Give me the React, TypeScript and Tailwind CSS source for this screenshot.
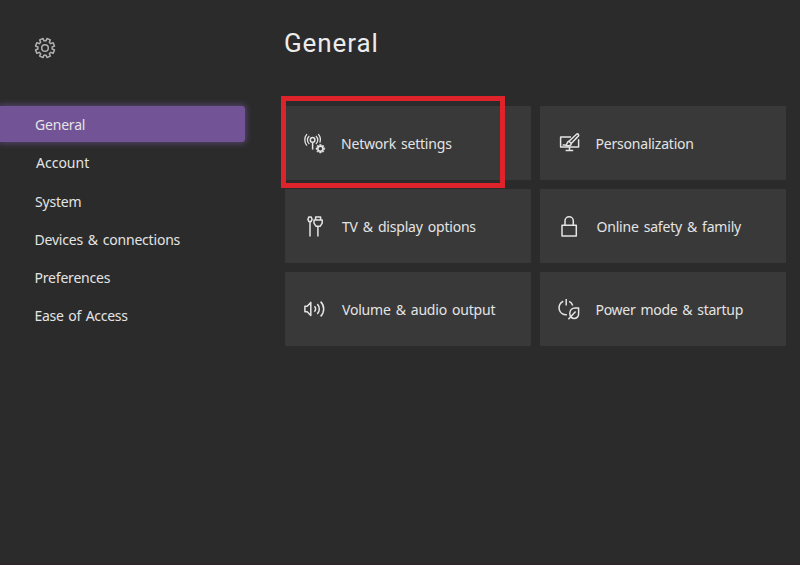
import type { ReactNode } from 'react'

// Outline of an eight-toothed cog, turned clockwise by `turn` radians
function cogPath(cx: number, cy: number, outer: number, inner: number, turn = 0) {
  const points: string[] = []
  for (let i = 0; i < 8; i++) {
    const mid = (i * Math.PI) / 4 + turn
    const corners = [
      [inner, -0.25],
      [outer, -0.19],
      [outer, 0.19],
      [inner, 0.25],
    ]
    corners.forEach(([r, offset]) => {
      const x = cx + r * Math.sin(mid + offset)
      const y = cy - r * Math.cos(mid + offset)
      points.push(`${x.toFixed(2)} ${y.toFixed(2)}`)
    })
  }
  return `M${points.join('L')}Z`
}

function Icon({ children, className = '' }: { children: ReactNode; className?: string }) {
  return (
    <svg
      viewBox="0 0 24 24"
      className={`h-6 w-6 shrink-0 ${className}`}
      fill="none"
      stroke="currentColor"
      strokeWidth="1.5"
      strokeLinejoin="round"
    >
      {children}
    </svg>
  )
}

const GearIcon = () => (
  <Icon className="text-[#b0b0b0]">
    <path d={cogPath(12, 12, 9.7, 7.2, Math.PI / 8)} />
    <circle cx="12" cy="12" r="3.3" />
  </Icon>
)

const NetworkIcon = () => (
  <Icon>
    <circle cx="10.6" cy="8.9" r="2.3" />
    <path d="M10.6 11.2V18.6" />
    <path d="M7.3 4.9a5.2 5.2 0 0 0 0 8M13.9 4.9a5.2 5.2 0 0 1 0 8" strokeWidth="1.3" />
    <path d="M4.9 3.2a8.8 8.8 0 0 0 0 11.4M16.3 3.2a8.8 8.8 0 0 1 1.6 8.4" strokeWidth="1.3" />
    <path d={cogPath(18.4, 17.7, 4.4, 3.2)} fill="currentColor" strokeWidth="0.5" />
    <circle cx="18.4" cy="17.7" r="1.8" className="fill-[#393939]" stroke="none" />
  </Icon>
)

const DisplayIcon = () => (
  <Icon>
    <path d="M6.9 2.9h2.2l1 2.3-1 2.4H6.9l-1-2.4zM8 7.6v15" />
    <path d="M13.6 6V3h5v3M12 6h8.2v3.2l-1.9 3h-4.4l-1.9-3zM15.9 12.2v10.4" />
  </Icon>
)

const VolumeIcon = () => (
  <Icon>
    <path d="M2.9 9.2h2.3l3.6-3.8v13.2l-3.6-3.8H2.9z" />
    <path d="M12.4 9.3a4 4 0 0 1 0 5.4M15.3 7.1a7 7 0 0 1 0 9.8M18.6 4.6a10.4 10.4 0 0 1 0 14.8" />
  </Icon>
)

const PersonalizationIcon = () => (
  <Icon>
    <path d="M14 5.9H3.6v10.2h18V8.2M12.5 16.1v3.2M8.6 19.4h7.6M5.6 14h3" />
    <path d="M12 10.3l7.5-7a1.2 1.2 0 0 1 1.8 1.8l-7.1 7.4" />
    <path d="M12 10.3l2.2 2.2c.2 2-1.8 2.5-5.4 1.9 1.5-.8.9-3.7 3.2-4.1z" />
  </Icon>
)

const LockIcon = () => (
  <Icon>
    <path d="M5 11.2h14.3v10.7H5z" />
    <path d="M8 11.2V7a4.15 4.15 0 0 1 8.3 0v4.2" />
  </Icon>
)

const PowerIcon = () => (
  <Icon>
    <path d="M9.2 2v6.5M6.3 4.3a7 7 0 0 0 3.6 13.4M12.2 4.4a7 7 0 0 1 3.5 4" />
    <path d="M21.6 11v6a4.3 4.3 0 0 1-4.3 4.4c-2.7 0-4.5-1.8-4.5-4.8 0-3.3 2.1-5.6 5.3-5.6zM11.4 22.3l7.2-7.8" />
  </Icon>
)

const menu = [
  { label: 'General', className: 'pl-[35px] pt-px' },
  { label: 'Account', className: 'pl-9 pt-px tracking-normal' },
  { label: 'System', className: 'pl-[35px] pt-0.5' },
  { label: 'Devices & connections', className: 'pl-[34.5px] pt-0.5' },
  { label: 'Preferences', className: 'pl-[34.5px] pt-0.5' },
  { label: 'Ease of Access', className: 'pl-[34.5px] pt-0.5 tracking-[-0.3px]' },
]

const tiles = [
  { label: 'Network settings', icon: <NetworkIcon />, className: 'pl-[15px]' },
  { label: 'Personalization', icon: <PersonalizationIcon />, className: 'pl-[14.5px]' },
  { label: 'TV & display options', icon: <DisplayIcon />, className: 'pl-4' },
  { label: 'Online safety & family', icon: <LockIcon />, className: 'pl-[15.5px]' },
  { label: 'Volume & audio output', icon: <VolumeIcon />, className: 'pl-4' },
  { label: 'Power mode & startup', icon: <PowerIcon />, className: 'pl-[14.5px] tracking-[-0.28px]' },
]

export default function App() {
  return (
    <div className="flex h-[565px] w-[800px] overflow-hidden border-b border-[#2e2329] bg-[#2b2b2b] font-['Noto_Sans',sans-serif] text-[14px] tracking-[-0.2px] text-[#e4e4e4]">
      <aside className="w-[285px] shrink-0 pt-9">
        <div className="mb-[46px] ml-[33px]">
          <GearIcon />
        </div>
        <nav className="flex w-[245px] flex-col gap-0.5">
          {menu.map((item, i) => (
            <a
              key={item.label}
              className={`flex h-9 items-center whitespace-nowrap [word-spacing:1.4px] ${item.className} ${
                i === 0 ? 'rounded-r-[3px] bg-[#725396] shadow-[0_0_6px_1px_#5a4673]' : ''
              }`}
            >
              {item.label}
            </a>
          ))}
        </nav>
      </aside>

      <main className="w-[501px] pt-[26px]">
        <h1 className="-ml-px mb-[46px] h-[34px] font-['Roboto',sans-serif] text-[26px] leading-[34px] tracking-[0.9px] text-[#ececec]">
          General
        </h1>
        <div className="relative grid grid-cols-2 gap-[9px]">
          {tiles.map((tile) => (
            <button
              key={tile.label}
              type="button"
              className="flex h-[74px] items-center rounded-[1px] bg-[#393939] pl-[17px] text-left"
            >
              {tile.icon}
              <span className={`whitespace-nowrap pt-px [word-spacing:1.6px] ${tile.className}`}>{tile.label}</span>
            </button>
          ))}
          <div className="absolute -left-1 -top-[10px] h-[92px] w-[224px] border-[5px] border-[#df232a]" />
        </div>
      </main>
    </div>
  )
}
